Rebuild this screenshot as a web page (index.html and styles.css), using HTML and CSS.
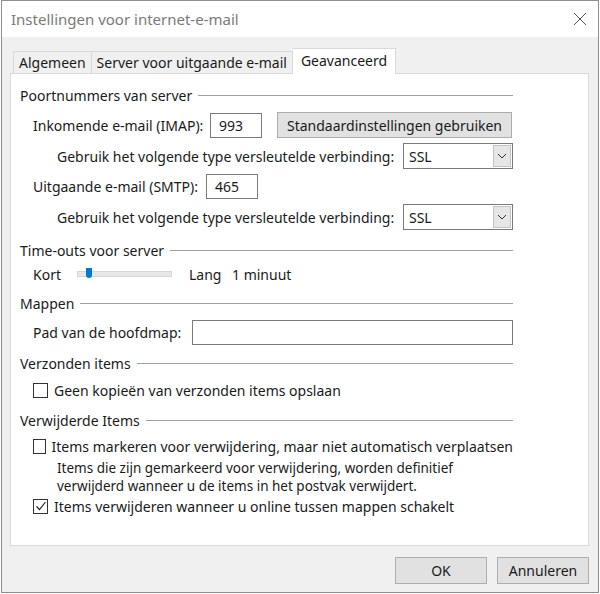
FILE: index.html
```html
<!DOCTYPE html>
<html lang="nl">
<head>
    <meta charset="UTF-8">
    <title>Instellingen voor internet-e-mail</title>
    <link rel="stylesheet" href="styles.css">
</head>
<body>
<div class="window">
    <div class="titlebar">
        <span class="title">Instellingen voor internet-e-mail</span>
        <svg class="close" width="14" height="14" viewBox="0 0 14 14">
            <path d="M1 1 L13 13 M13 1 L1 13" stroke="#555" stroke-width="1" fill="none"/>
        </svg>
    </div>

    <div class="dialog">
        <div class="tabs">
            <div class="tab tab-first">Algemeen</div>
            <div class="tab">Server voor uitgaande e-mail</div>
            <div class="tab active">Geavanceerd</div>
        </div>

        <div class="panel">
            <div class="group">Poortnummers van server</div>

            <div class="row row-imap">
                <label class="lbl lbl-imap">Inkomende e-mail (IMAP):</label>
                <input class="text port" type="text" value="993">
                <button class="btn btn-default">Standaardinstellingen gebruiken</button>
            </div>
            <div class="row row-enc sub">
                <label class="lbl lbl-enc">Gebruik het volgende type versleutelde verbinding:</label>
                <div class="combo"><span>SSL</span><span class="arrow"><svg width="10" height="6" viewBox="0 0 10 6"><path d="M1 1 L5 5 L9 1" stroke="#333" fill="none"/></svg></span></div>
            </div>
            <div class="row row-smtp">
                <label class="lbl lbl-smtp">Uitgaande e-mail (SMTP):</label>
                <input class="text port" type="text" value="465">
            </div>
            <div class="row row-enc sub">
                <label class="lbl lbl-enc">Gebruik het volgende type versleutelde verbinding:</label>
                <div class="combo"><span>SSL</span><span class="arrow"><svg width="10" height="6" viewBox="0 0 10 6"><path d="M1 1 L5 5 L9 1" stroke="#333" fill="none"/></svg></span></div>
            </div>

            <div class="group group-timeout">Time-outs voor server</div>
            <div class="row row-slider">
                <span class="kort">Kort</span>
                <div class="track"><span class="thumb"></span></div>
                <span class="lang">Lang</span>
                <span>1 minuut</span>
            </div>

            <div class="group group-mappen">Mappen</div>
            <div class="row row-pad">
                <label class="lbl lbl-pad">Pad van de hoofdmap:</label>
                <input class="text path" type="text" value="">
            </div>

            <div class="group group-sent">Verzonden items</div>
            <div class="row row-check">
                <span class="check"></span>
                <span>Geen kopieën van verzonden items opslaan</span>
            </div>

            <div class="group group-deleted">Verwijderde Items</div>
            <div class="row row-check row-mark">
                <span class="check"></span>
                <span>Items markeren voor verwijdering, maar niet automatisch verplaatsen</span>
            </div>
            <div class="note">
                <div>Items die zijn gemarkeerd voor verwijdering, worden definitief</div>
                <div>verwijderd wanneer u de items in het postvak verwijdert.</div>
            </div>
            <div class="row row-check row-online">
                <span class="check"><svg width="12" height="12" viewBox="0 0 12 12"><path d="M1.5 6.5 L4.5 9.5 L10.5 2" stroke="#222" stroke-width="1.2" fill="none"/></svg></span>
                <span>Items verwijderen wanneer u online tussen mappen schakelt</span>
            </div>
        </div>

        <div class="footer">
            <button class="btn btn-dlg">OK</button>
            <button class="btn btn-dlg">Annuleren</button>
        </div>
    </div>
</div>
</body>
</html>
```

FILE: styles.css
```css
body {
    margin: 0;
    background-color: #ffffff;
    font-family: "Noto Sans", "Open Sans", sans-serif;
    font-size: 14px;
    color: #1a1a1a;
}
.window {
    width: 596px;
    height: 591px;
    margin-left: 1px;
    border: 1px solid #8e8e8e;
    background-color: #f0f0f0;
    display: flex;
    flex-direction: column;
}
.titlebar {
    box-sizing: border-box;
    height: 36px;
    background-color: #ffffff;
    display: flex;
    align-items: center;
    justify-content: space-between;
    padding: 0 11px 0 9px;
}
.title {
    color: #7a7a7a;
    font-size: 15px;
}
.dialog {
    flex: 1;
    padding: 11px 9px 0 8px;
    display: flex;
    flex-direction: column;
}
.tabs {
    display: flex;
    align-items: flex-end;
    height: 25px;
    padding-left: 3px;
}
.tab {
    height: 21px;
    padding: 0 5px;
    border: 1px solid #d9d9d9;
    border-bottom: none;
    border-left: none;
    background-color: #f0f0f0;
    line-height: 21px;
    white-space: nowrap;
}
.tab-first {
    border-left: 1px solid #d9d9d9;
}
.tab.active {
    height: 25px;
    line-height: 24px;
    background-color: #ffffff;
    padding: 0 8px;
    margin-bottom: -1px;
    position: relative;
}
.panel {
    height: 460px;
    background-color: #ffffff;
    border: 1px solid #d9d9d9;
    padding: 11px 75px 0 9px;
}
.group {
    display: flex;
    align-items: center;
    height: 20px;
    white-space: nowrap;
}
.group::after {
    content: "";
    flex: 1;
    height: 1px;
    margin-left: 6px;
    background-color: #a0a0a0;
}
.row {
    display: flex;
    align-items: center;
    padding-left: 13px;
    white-space: nowrap;
}
.row.sub {
    padding-left: 37px;
}
.lbl {
    flex: none;
}
.row-imap { margin-top: 7px; height: 26px; }
.row-enc { margin-top: 5px; height: 26px; }
.row-smtp { margin-top: 4px; height: 26px; }
.lbl-imap { width: 177px; }
.lbl-smtp { width: 173px; }
.lbl-enc { width: 346px; }
.text {
    box-sizing: border-box;
    height: 25px;
    border: 1px solid #7a7a7a;
    padding: 0 8px;
    font-family: inherit;
    font-size: 14px;
    color: #1a1a1a;
    outline: none;
}
.port {
    width: 52px;
}
.btn {
    font-family: inherit;
    font-size: 14px;
    color: #1a1a1a;
    background-color: #e1e1e1;
    border: 1px solid #adadad;
    padding: 0;
}
.btn-default {
    width: 235px;
    height: 26px;
    margin-left: 15px;
}
.combo {
    box-sizing: border-box;
    width: 110px;
    height: 26px;
    border: 1px solid #7a7a7a;
    background-color: #ffffff;
    display: flex;
    align-items: center;
    justify-content: space-between;
    padding: 0 1px 0 5px;
}
.arrow {
    box-sizing: border-box;
    width: 18px;
    height: 22px;
    background-color: #e6e6e6;
    border: 1px solid #c4c4c4;
    display: flex;
    align-items: center;
    justify-content: center;
}
.group-timeout { margin-top: 10px; }
.row-slider { margin-top: 4px; height: 20px; }
.kort { width: 44px; }
.track {
    width: 93px;
    height: 4px;
    background-color: #e7e7e7;
    border: 1px solid #d6d6d6;
    position: relative;
}
.thumb {
    position: absolute;
    left: 8px;
    top: -4px;
    width: 6px;
    height: 10px;
    background-color: #0078d7;
    border-radius: 0 0 3px 3px;
}
.lang {
    margin-left: 17px;
    width: 43px;
}
.group-mappen { margin-top: 9px; }
.row-pad { margin-top: 7px; height: 25px; }
.lbl-pad { width: 159px; }
.path { width: 321px; }
.group-sent { margin-top: 8px; }
.row-check { margin-top: 7px; height: 20px; }
.row-sent { margin-top: 8px; }
.group-deleted { margin-top: 10px; }
.row-mark { margin-top: 6px; }
.row-online { margin-top: 1px; }
.check {
    box-sizing: border-box;
    width: 15px;
    height: 15px;
    border: 1px solid #333333;
    background-color: #ffffff;
    margin-right: 6px;
    display: flex;
    align-items: center;
    justify-content: center;
}
.note {
    margin-top: 3px;
    padding-left: 37px;
    font-size: 13.5px;
    line-height: 18px;
    white-space: nowrap;
}
.footer {
    display: flex;
    justify-content: flex-end;
    gap: 10px;
    padding-top: 11px;
}
.btn-dlg {
    width: 92px;
    height: 27px;
}
```
